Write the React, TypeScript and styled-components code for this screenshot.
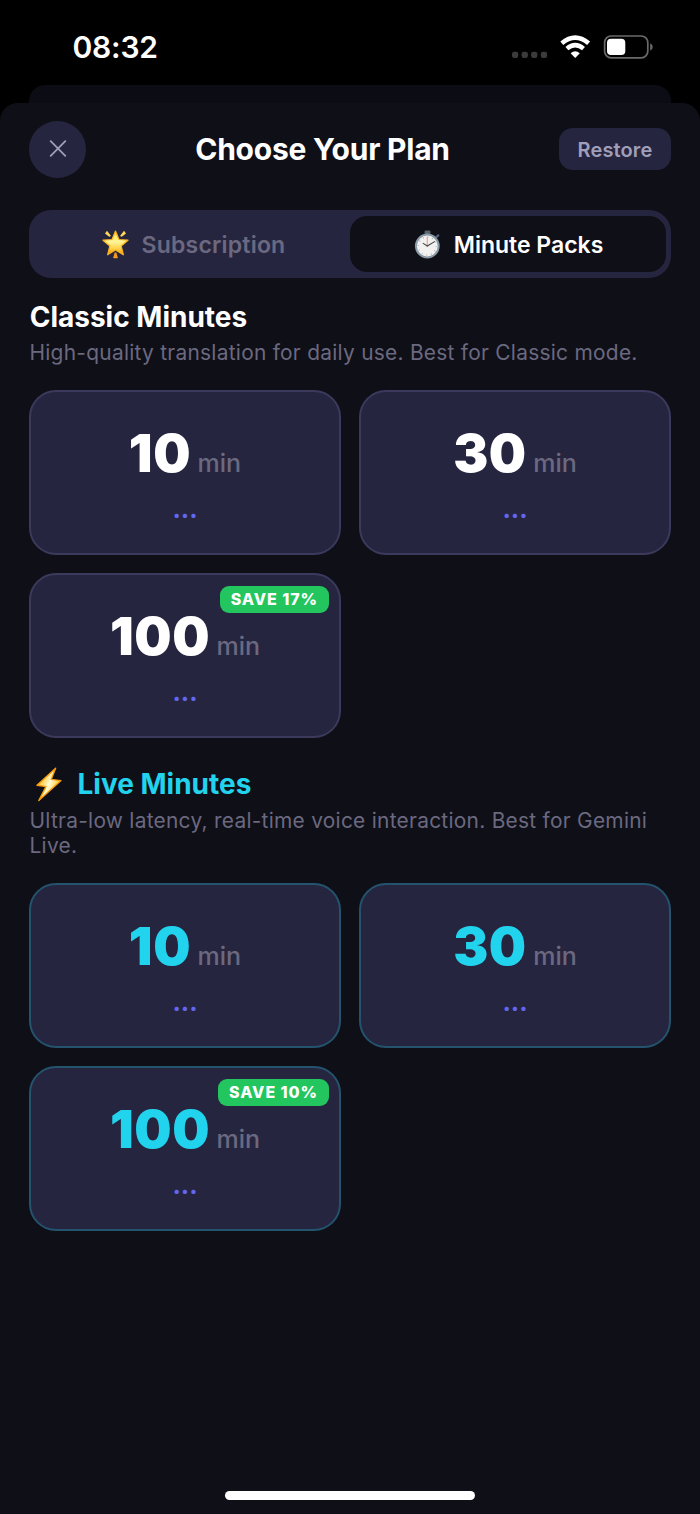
import React from "react";
import styled, { createGlobalStyle } from "styled-components";

const GlobalStyle = createGlobalStyle`
  *, *::before, *::after { box-sizing: border-box; }
  body {
    margin: 0;
    background: #000;
    font-family: Inter, "Liberation Sans", sans-serif;
    -webkit-font-smoothing: antialiased;
  }
  h1, h2, p { margin: 0; }
  button { font: inherit; border: 0; padding: 0; }
`;

const Screen = styled.div`
  width: 700px;
  height: 1514px;
  display: flex;
  flex-direction: column;
  background: #000;
  overflow: hidden;
`;

const StatusBar = styled.header`
  height: 85px;
  flex: none;
  display: flex;
  align-items: flex-start;
  justify-content: space-between;
  padding: 30px 47px 0 72.5px;
`;

const Clock = styled.time`
  font-size: 30px;
  line-height: 34px;
  font-weight: 600;
  letter-spacing: -0.2px;
  color: #fff;
`;

const StatusIcons = styled.div`
  display: flex;
  align-items: center;
  height: 34px;
`;

const BackSheet = styled.div`
  flex: none;
  height: 18px;
  margin: 0 29px;
  border-radius: 16px 16px 0 0;
  background: #0c0c14;
`;

const Sheet = styled.main`
  flex: 1;
  display: flex;
  flex-direction: column;
  padding: 18px 29px 0;
  border-radius: 18px 18px 0 0;
  background: #0f0f17;
`;

const TopBar = styled.div`
  display: flex;
  align-items: center;
  justify-content: space-between;
  height: 57px;
`;

const CloseButton = styled.button`
  display: grid;
  place-items: center;
  width: 57px;
  height: 57px;
  padding-bottom: 1px;
  border-radius: 50%;
  background: #262540;
`;

const Title = styled.h1`
  margin-bottom: 1px;
  font-size: 30px;
  line-height: 36px;
  font-weight: 700;
  letter-spacing: -0.22px;
  color: #fff;
`;

const RestoreButton = styled.button`
  width: 112px;
  height: 42px;
  margin-bottom: 1px;
  padding-top: 1px;
  border-radius: 14px;
  background: #262540;
  color: #a09fb8;
  font-size: 20px;
  font-weight: 600;
  letter-spacing: 0.15px;
`;

const Tabs = styled.nav`
  display: grid;
  grid-template-columns: 1fr 1fr;
  height: 68px;
  margin-top: 32px;
  padding: 6px 5px;
  border-radius: 22px;
  background: #262540;
`;

const Tab = styled.button<{ $active?: boolean }>`
  display: flex;
  align-items: center;
  justify-content: center;
  gap: 13px;
  padding: 1px 0 0 ${(p) => (p.$active ? 1 : 3)}px;
  border-radius: 17px;
  background: ${(p) => (p.$active ? "#0f0f17" : "transparent")};
  color: ${(p) => (p.$active ? "#fff" : "#6b6980")};
  font-size: 23px;
  font-weight: 600;
  letter-spacing: ${(p) => (p.$active ? 0 : 0.2)}px;
`;

const Section = styled.section<{ $spacing: number }>`
  margin-top: ${(p) => p.$spacing}px;
`;

const SectionTitle = styled.h2<{ $live?: boolean }>`
  display: flex;
  align-items: center;
  gap: 15.5px;
  padding-left: ${(p) => (p.$live ? 6 : 0.7)}px;
  font-size: 28px;
  line-height: 34px;
  font-weight: 700;
  letter-spacing: 0;
  color: ${(p) => (p.$live ? "#22d3ee" : "#fff")};
`;

const Description = styled.p`
  margin-top: 6px;
  padding-left: 0.5px;
  font-size: 20.9px;
  line-height: 25.6px;
  letter-spacing: 0.27px;
  color: #6b6980;
`;

const PackGrid = styled.div`
  display: grid;
  grid-template-columns: 312px 312px;
  grid-auto-rows: 165px;
  gap: 18px;
  margin-top: 24.5px;
`;

const PackCard = styled.article<{ $live?: boolean }>`
  position: relative;
  display: flex;
  flex-direction: column;
  align-items: center;
  gap: 11px;
  padding-top: 31px;
  border: 2px solid ${(p) => (p.$live ? "#24536e" : "#3c3a5c")};
  border-radius: 27px;
  background: #262540;
`;

const Amount = styled.div<{ $live?: boolean }>`
  display: flex;
  align-items: baseline;
  gap: 6.5px;
  font-size: 52.5px;
  line-height: 60px;
  font-weight: 900;
  letter-spacing: 0.6px;
  color: ${(p) => (p.$live ? "#22d3ee" : "#fff")};
`;

const Unit = styled.span`
  font-size: 25px;
  line-height: 30px;
  font-weight: 500;
  letter-spacing: 0;
  color: #6b6980;
`;

const Price = styled.div`
  font-size: 25px;
  line-height: 30px;
  font-weight: 700;
  color: #6366f1;
`;

const SaveBadge = styled.span`
  position: absolute;
  top: 10.5px;
  right: 10px;
  height: 27px;
  padding: 0 11px;
  border-radius: 9px;
  background: #22c55e;
  color: #fff;
  font-size: 16px;
  line-height: 27px;
  font-weight: 800;
  letter-spacing: 0.95px;
`;

const HomeIndicator = styled.div`
  width: 250px;
  height: 9px;
  margin: auto auto 14px;
  border-radius: 5px;
  background: #fff;
`;

const StatusGlyphs = () => (
  <svg width="142" height="34" viewBox="511 30 142 34">
    <g fill="#3b3b3c">
      <rect x="512" y="51.7" width="6.3" height="6.3" rx="2.2" />
      <rect x="521.6" y="51.7" width="6.3" height="6.3" rx="2.2" />
      <rect x="531.1" y="51.7" width="6.3" height="6.3" rx="2.2" />
      <rect x="540.8" y="51.7" width="6.3" height="6.3" rx="2.2" />
    </g>
    <g fill="none" stroke="#fff">
      <path d="M561.8 43.2Q575.2 32.2 588.6 43.2" strokeWidth="4.6" />
      <path d="M566.9 48.6Q575.2 41.6 583.5 48.6" strokeWidth="4.4" />
    </g>
    <path d="M570.6 53.2Q575.2 49.2 579.8 53.2L575.2 58Z" fill="#fff" />
    <rect x="604.6" y="36" width="43.2" height="21.9" rx="6.6" fill="none" stroke="#6a6a6a" strokeWidth="1.7" />
    <rect x="607" y="38.7" width="18.3" height="16.4" rx="4" fill="#fff" />
    <path d="M650.2 43.3Q652.7 44.4 652.7 47T650.2 50.7Z" fill="#6a6a6a" />
  </svg>
);

const CloseIcon = () => (
  <svg width="18" height="18" viewBox="0 0 18 18">
    <path d="M1.7 1.2L16.3 15.8M16.3 1.2L1.7 15.8" stroke="#a09fb8" strokeWidth="1.8" strokeLinecap="round" />
  </svg>
);

const GlowingStar = () => (
  <svg width="27" height="29" viewBox="0 0 27 29">
    <defs>
      <linearGradient id="starFill" x1="0" y1="0" x2="0" y2="1">
        <stop offset="0" stopColor="#ffd936" />
        <stop offset="0.45" stopColor="#fff59b" />
        <stop offset="0.75" stopColor="#ffd044" />
        <stop offset="1" stopColor="#f58a0b" />
      </linearGradient>
    </defs>
    <path
      d="M13.5 1L17 9.5L26 10.2L19.2 16L21.4 24.8L13.5 20.1L5.6 24.8L7.8 16L1 10.2L10 9.5Z"
      fill="url(#starFill)"
      stroke="#f9b41c"
      strokeWidth="1.2"
      strokeLinejoin="round"
    />
    <path d="M5 0.8L9 6.1L7.2 6.8L3 3.4ZM22 0.8L18 6.1L19.8 6.8L24 3.4Z" fill="#ffd85a" />
    <path d="M12.7 22.6L14.3 22.6L15.9 28Q13.5 28.6 11.1 28Z" fill="#f79a1a" />
  </svg>
);

const Stopwatch = () => (
  <svg width="27" height="29" viewBox="0 0 27 29">
    <rect x="10.5" y="0.6" width="6" height="3.4" rx="1.2" fill="#59636c" />
    <path d="M22.5 7L24.2 5.4" stroke="#52617a" strokeWidth="2.4" strokeLinecap="round" />
    <circle cx="13.3" cy="16" r="11.4" fill="#f1f1f1" stroke="#8a99a7" strokeWidth="2" />
    <circle cx="13.3" cy="16" r="9" fill="none" stroke="#b4b4b4" strokeWidth="1.6" strokeDasharray="0.8 3.912" />
    <path d="M13.3 17V6.8" stroke="#f2a08f" strokeWidth="1.2" />
    <path d="M9.2 13.4L13.3 16L20.5 11.6" fill="none" stroke="#4a4a4a" strokeWidth="1.1" strokeLinecap="round" />
  </svg>
);

const Bolt = () => (
  <svg width="27" height="35" viewBox="0 0 27 35">
    <defs>
      <linearGradient id="boltFill" x1="0.1" y1="0.25" x2="0.9" y2="0.75">
        <stop offset="0.1" stopColor="#ffc229" />
        <stop offset="0.5" stopColor="#fffbd2" />
        <stop offset="0.9" stopColor="#ffc229" />
      </linearGradient>
    </defs>
    <path
      d="M20.6 1.2L2 18.2L11 19.6L3.8 33.6L26 13.6L16.2 12.4Z"
      fill="url(#boltFill)"
      stroke="#f59a0c"
      strokeWidth="1.4"
      strokeLinejoin="round"
    />
  </svg>
);

type Pack = { minutes: number; save?: string };

const classicPacks: Pack[] = [{ minutes: 10 }, { minutes: 30 }, { minutes: 100, save: "SAVE 17%" }];
const livePacks: Pack[] = [{ minutes: 10 }, { minutes: 30 }, { minutes: 100, save: "SAVE 10%" }];

const Packs = ({ packs, live }: { packs: Pack[]; live?: boolean }) => (
  <PackGrid>
    {packs.map((pack) => (
      <PackCard key={pack.minutes} $live={live}>
        <Amount $live={live}>
          {pack.minutes}
          <Unit>min</Unit>
        </Amount>
        <Price>...</Price>
        {pack.save && <SaveBadge>{pack.save}</SaveBadge>}
      </PackCard>
    ))}
  </PackGrid>
);

export default function App() {
  return (
    <Screen>
      <GlobalStyle />
      <StatusBar>
        <Clock>08:32</Clock>
        <StatusIcons>
          <StatusGlyphs />
        </StatusIcons>
      </StatusBar>
      <BackSheet />
      <Sheet>
        <TopBar>
          <CloseButton aria-label="Close">
            <CloseIcon />
          </CloseButton>
          <Title>Choose Your Plan</Title>
          <RestoreButton>Restore</RestoreButton>
        </TopBar>
        <Tabs>
          <Tab>
            <GlowingStar />
            Subscription
          </Tab>
          <Tab $active>
            <Stopwatch />
            Minute Packs
          </Tab>
        </Tabs>
        <Section $spacing={22}>
          <SectionTitle>Classic Minutes</SectionTitle>
          <Description>High-quality translation for daily use. Best for Classic mode.</Description>
          <Packs packs={classicPacks} />
        </Section>
        <Section $spacing={28.5}>
          <SectionTitle $live>
            <Bolt />
            Live Minutes
          </SectionTitle>
          <Description>Ultra-low latency, real-time voice interaction. Best for Gemini Live.</Description>
          <Packs packs={livePacks} live />
        </Section>
        <HomeIndicator />
      </Sheet>
    </Screen>
  );
}
